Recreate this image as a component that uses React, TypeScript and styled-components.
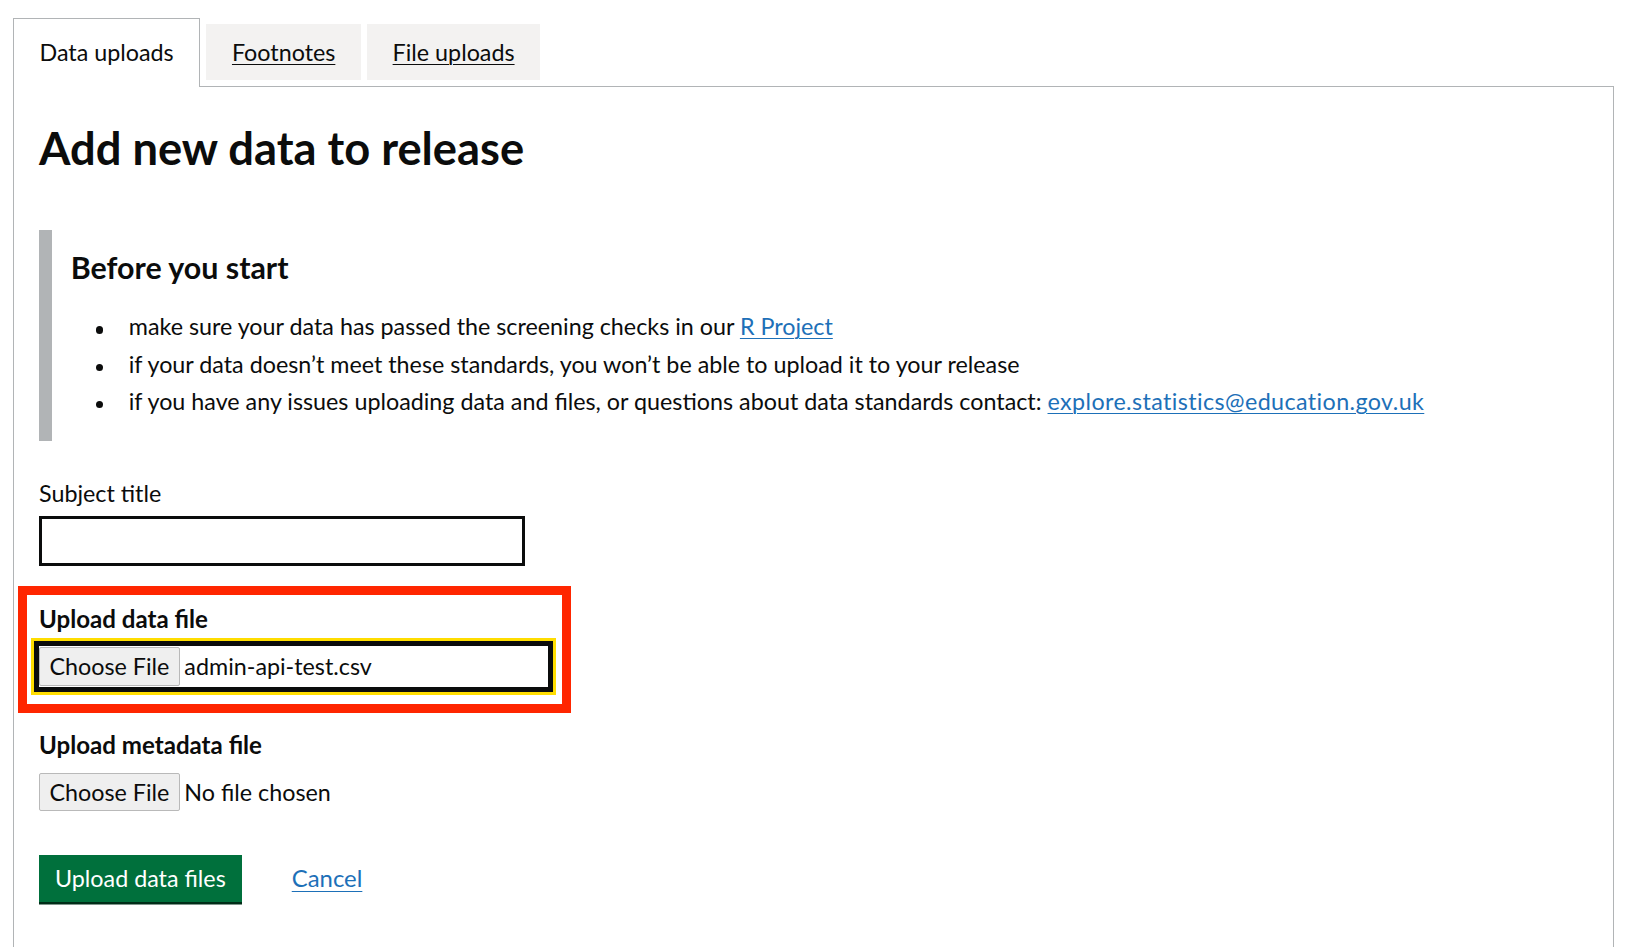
import React from "react";
import styled, { createGlobalStyle, css } from "styled-components";

const GlobalStyle = createGlobalStyle`
  html, body {
    margin: 0;
    padding: 0;
    overflow: hidden;
    background: #ffffff;
  }
  body {
    font-family: Lato, "Noto Sans", Arial, sans-serif;
    color: #0b0c0c;
    -webkit-font-smoothing: antialiased;
  }
  * { box-sizing: border-box; }
`;

const TEXT = "#0b0c0c";
const GREY_BORDER = "#b1b4b6";
const LINK = "#1d70b8";

const Page = styled.div`
  padding: 18px 16px 0 13px;
`;

const TabList = styled.ul`
  display: flex;
  align-items: flex-start;
  list-style: none;
  margin: 0;
  padding: 0;
`;

const Tab = styled.li<{ $selected?: boolean }>`
  margin-right: 6.25px;
  font-size: 23.3px;
  line-height: 31.25px;
  ${({ $selected }) =>
    $selected
      ? css`
          position: relative;
          z-index: 1;
          margin-bottom: -1px;
          padding: 17.5px 25.5px 19.25px;
          border: 1px solid ${GREY_BORDER};
          border-bottom: 0;
          background: #ffffff;
        `
      : css`
          margin-top: 6px;
          padding: 12.5px 25.5px;
          background: #f3f2f1;
        `}
`;

const TabLink = styled.a<{ $selected?: boolean }>`
  color: ${TEXT};
  text-decoration: ${({ $selected }) => ($selected ? "none" : "underline")};
  text-decoration-thickness: 1px;
  text-underline-offset: 0.15em;
  cursor: pointer;
`;

const Panel = styled.section`
  border: 1px solid ${GREY_BORDER};
  padding: 36px 25px 37.5px;
  min-height: 920px;
`;

const Title = styled.h1`
  margin: 0 0 57px;
  font-size: 45.3px;
  line-height: 50px;
  font-weight: 700;
`;

const Inset = styled.div`
  border-left: 13px solid ${GREY_BORDER};
  padding: 18.75px 0 18px 18.75px;
  margin: 0 0 37.4px;
`;

const InsetHeading = styled.h2`
  margin: 0 0 25px;
  font-size: 30.4px;
  line-height: 37.5px;
  font-weight: 700;
`;

const BulletList = styled.ul`
  margin: 0;
  padding: 0;
  list-style: none;
`;

const BulletItem = styled.li`
  display: grid;
  grid-template-columns: 58px 1fr;
  margin-bottom: 6px;
  font-size: 23.3px;
  line-height: 31.25px;
`;

const Dot = styled.span`
  width: 7.5px;
  height: 7.5px;
  margin: 15px 0 0 25px;
  border-radius: 50%;
  background: ${TEXT};
`;

const Link = styled.a<{ $spaced?: boolean }>`
  color: ${LINK};
  text-decoration: underline;
  text-decoration-thickness: 1px;
  text-underline-offset: 0.15em;
  letter-spacing: ${({ $spaced }) => ($spaced ? "0.4px" : "normal")};
  cursor: pointer;
`;

const FormGroup = styled.div`
  position: relative;
  margin-bottom: 37.5px;
`;

const Highlight = styled.span`
  position: absolute;
  top: -17.6px;
  left: -20.7px;
  width: 553px;
  height: 127.5px;
  border: 9px solid #ff2600;
  pointer-events: none;
`;

const Label = styled.label<{ $bold?: boolean }>`
  display: block;
  margin-bottom: 6.25px;
  font-size: ${({ $bold }) => ($bold ? "24.1px" : "23.3px")};
  font-weight: ${({ $bold }) => ($bold ? 700 : 400)};
  line-height: 31.25px;
`;

const TextInput = styled.input`
  display: block;
  width: 486px;
  height: 50px;
  margin: 0;
  padding: 0 6px;
  border: 3px solid ${TEXT};
  border-radius: 0;
  font: inherit;
  font-size: 23.3px;
  color: ${TEXT};
  background: #ffffff;
`;

const FileField = styled.div<{ $focused?: boolean }>`
  display: flex;
  align-items: center;
  padding: 6.25px 0;
  ${({ $focused }) =>
    $focused &&
    css`
      width: 519px;
      margin-left: -5px;
      padding-left: 5px;
      box-shadow: inset 0 0 0 5px ${TEXT};
      outline: 3.5px solid #ffdd00;
    `}
`;

const FileButton = styled.span`
  display: inline-flex;
  align-items: center;
  height: 38.4px;
  padding: 0 9.5px;
  border: 1px solid #b9b9b9;
  border-radius: 2px;
  background: #efefef;
  font-size: 23.3px;
  line-height: 1;
  color: ${TEXT};
`;

const FileName = styled.span`
  margin-left: 4.5px;
  font-size: 23.3px;
  line-height: 31.25px;
`;

const ButtonGroup = styled.div`
  display: flex;
  align-items: baseline;
  gap: 50px;
`;

const PrimaryButton = styled.button`
  margin: 0;
  padding: 10px 14px 8.75px;
  border: 2.5px solid transparent;
  border-radius: 0;
  background: #00703c;
  box-shadow: 0 2.5px 0 #002d18;
  color: #ffffff;
  font-family: inherit;
  font-size: 23.3px;
  line-height: 23.75px;
  cursor: pointer;
`;

const CancelLink = styled(Link)`
  font-size: 23.9px;
  line-height: 31.25px;
`;

export default function App() {
  return (
    <>
      <GlobalStyle />
      <Page>
        <TabList>
          <Tab $selected>
            <TabLink $selected>Data uploads</TabLink>
          </Tab>
          <Tab>
            <TabLink>Footnotes</TabLink>
          </Tab>
          <Tab>
            <TabLink>File uploads</TabLink>
          </Tab>
        </TabList>
        <Panel>
          <Title>Add new data to release</Title>
          <Inset>
            <InsetHeading>Before you start</InsetHeading>
            <BulletList>
              <BulletItem>
                <Dot />
                <span>
                  make sure your data has passed the screening checks in our <Link>R Project</Link>
                </span>
              </BulletItem>
              <BulletItem>
                <Dot />
                <span>if your data doesn’t meet these standards, you won’t be able to upload it to your release</span>
              </BulletItem>
              <BulletItem>
                <Dot />
                <span>
                  if you have any issues uploading data and files, or questions about data standards contact:{" "}
                  <Link $spaced>explore.statistics@education.gov.uk</Link>
                </span>
              </BulletItem>
            </BulletList>
          </Inset>

          <FormGroup>
            <Label htmlFor="subject-title">Subject title</Label>
            <TextInput id="subject-title" type="text" />
          </FormGroup>

          <FormGroup>
            <Highlight />
            <Label $bold>Upload data file</Label>
            <FileField $focused>
              <FileButton>Choose File</FileButton>
              <FileName>admin-api-test.csv</FileName>
            </FileField>
          </FormGroup>

          <FormGroup>
            <Label $bold>Upload metadata file</Label>
            <FileField>
              <FileButton>Choose File</FileButton>
              <FileName>No file chosen</FileName>
            </FileField>
          </FormGroup>

          <ButtonGroup>
            <PrimaryButton type="button">Upload data files</PrimaryButton>
            <CancelLink>Cancel</CancelLink>
          </ButtonGroup>
        </Panel>
      </Page>
    </>
  );
}
